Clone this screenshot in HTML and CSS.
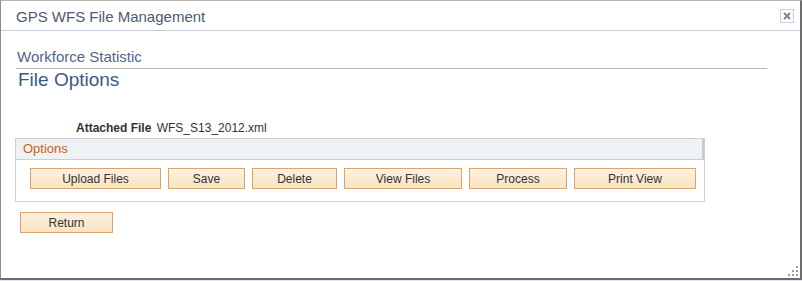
FILE: index.html
```html
<!DOCTYPE html>
<html lang="en">
<head>
  <meta charset="UTF-8" />
  <title>GPS WFS File Management</title>
  <link rel="stylesheet" href="styles.css">
</head>
<body>
  <div class="janela">
    <div class="barra-titulo">
      <span class="titulo">GPS WFS File Management</span>
      <span class="fechar" title="Close">
        <svg width="8" height="8" viewBox="0 0 8 8">
          <path d="M1 1 L7 7 M7 1 L1 7" stroke="#7f8593" stroke-width="2"/>
        </svg>
      </span>
    </div>
    <div class="conteudo">
      <div class="subtitulo">Workforce Statistic</div>
      <h1>File Options</h1>
      <div class="arquivo">
        <span class="rotulo">Attached File</span>
        <span class="valor">WFS_S13_2012.xml</span>
      </div>
      <div class="opcoes">
        <div class="opcoes-topo">Options</div>
        <div class="opcoes-botoes">
          <button class="b-upload">Upload Files</button>
          <button class="b-save">Save</button>
          <button class="b-delete">Delete</button>
          <button class="b-view">View Files</button>
          <button class="b-process">Process</button>
          <button class="b-print">Print View</button>
        </div>
      </div>
      <button class="b-return">Return</button>
    </div>
    <svg class="grip" width="10" height="10" viewBox="0 0 10 10">
      <rect x="8" y="0" width="2" height="2" fill="#9a9ea8"/>
      <rect x="4" y="4" width="2" height="2" fill="#9a9ea8"/>
      <rect x="8" y="4" width="2" height="2" fill="#9a9ea8"/>
      <rect x="0" y="8" width="2" height="2" fill="#9a9ea8"/>
      <rect x="4" y="8" width="2" height="2" fill="#9a9ea8"/>
      <rect x="8" y="8" width="2" height="2" fill="#9a9ea8"/>
    </svg>
  </div>
</body>
</html>
```

FILE: styles.css
```css
* {
  box-sizing: border-box;
}
body {
  margin: 0;
  padding: 0;
  background: #e2e5eb;
  font-family: "Liberation Sans", Arial, sans-serif;
  color: #333;
}
.janela {
  position: relative;
  width: 802px;
  height: 280px;
  background: #fff;
  border: 1px solid #8c8c8c;
  border-top-color: #b4b4b4;
  border-right: 2px solid #6e6e6e;
  border-bottom: 2px solid #6e6e6e;
}
.barra-titulo {
  height: 30px;
  border-bottom: 1px solid #c7ced7;
  display: flex;
  align-items: center;
  justify-content: space-between;
  padding: 1px 6px 0 15px;
}
.titulo {
  font-size: 15px;
  color: #4b5a74;
}
.fechar {
  width: 14px;
  height: 14px;
  border: 1px solid #c8cbdd;
  display: flex;
  align-items: center;
  justify-content: center;
}
.conteudo {
  padding: 0 0 0 14px;
}
.subtitulo {
  margin: 17px 0 0 1px;
  width: 751px;
  font-size: 15px;
  line-height: 18px;
  padding: 0 0 2px 1px;
  border-bottom: 1px solid #b6b6b6;
  color: #4f6687;
}
h1 {
  margin: 0 0 0 3px;
  font-size: 19px;
  line-height: 22px;
  font-weight: normal;
  color: #3d5a82;
}
.arquivo {
  margin: 30px 0 0 61px;
  font-size: 12px;
  line-height: 14px;
}
.rotulo {
  font-weight: bold;
  margin-right: 2px;
}
.opcoes {
  margin-top: 3px;
  width: 690px;
  border: 1px solid #cbd0d8;
}
.opcoes-topo {
  height: 21px;
  line-height: 20px;
  background: #eef2f4;
  border-bottom: 1px solid #c9ced6;
  border-right: 2px solid #c6cbd2;
  padding-left: 7px;
  font-size: 13px;
  color: #c2621f;
}
.opcoes-botoes {
  display: flex;
  gap: 7px;
  padding: 8px 0 12px 14px;
}
button {
  height: 21px;
  padding: 0;
  border: 1px solid #dba36e;
  background: linear-gradient(#fdf1de, #f9e3c2);
  font-family: "Liberation Sans", Arial, sans-serif;
  font-size: 12px;
  color: #333;
  cursor: pointer;
}
.b-upload { width: 131px; }
.b-save { width: 77px; }
.b-delete { width: 85px; }
.b-view { width: 118px; }
.b-process { width: 98px; }
.b-print { width: 122px; }
.b-return {
  width: 93px;
  margin: 10px 0 0 5px;
}
.grip {
  position: absolute;
  right: 2px;
  bottom: 2px;
}
```
